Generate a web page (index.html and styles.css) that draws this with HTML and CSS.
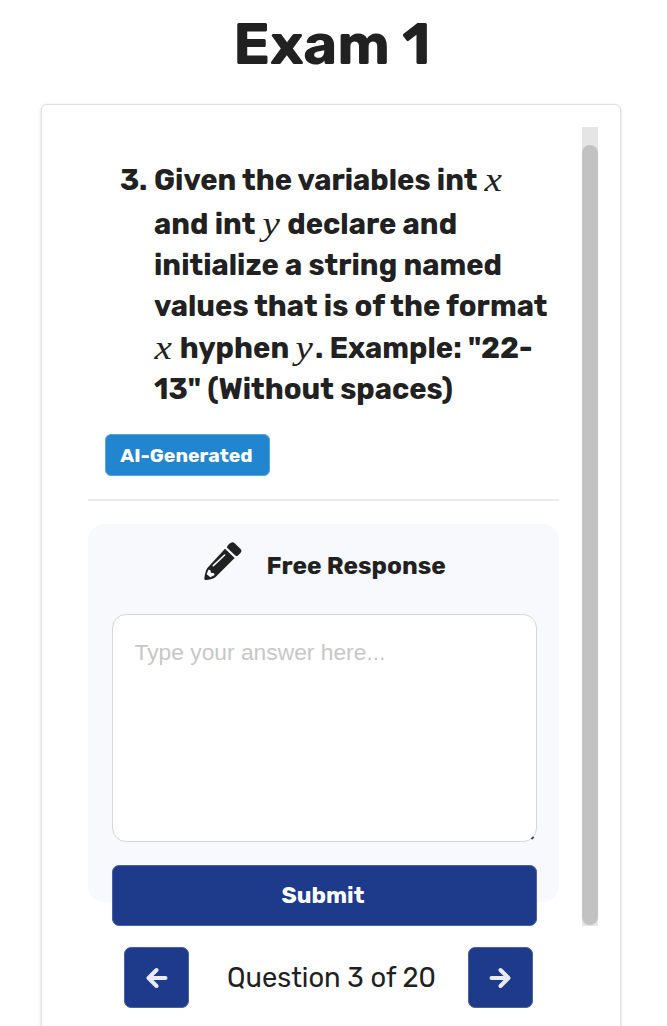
FILE: index.html
```html
<!DOCTYPE html>
<html lang="en">
<head>
<meta charset="utf-8">
<title>Exam 1</title>
<link rel="stylesheet" href="styles.css">
</head>
<body>
<h1 class="title">Exam 1</h1>
<main class="card">
  <div class="viewport">
    <div class="content">
      <div class="question">
        <span class="number">3.</span>
        <div class="prompt">
          <div class="line l1">Given the variables int <i class="math">x</i></div>
          <div class="line l2">and int <i class="math">y</i> declare and</div>
          <div class="line l3">initialize a string named</div>
          <div class="line l4">values that is of the format</div>
          <div class="line l5"><i class="math">x</i> hyphen <i class="math">y</i>. Example: "22-</div>
          <div class="line l6">13" (Without spaces)</div>
        </div>
      </div>
      <span class="badge">AI-Generated</span>
      <section class="response">
        <h2 class="heading">
          <svg class="pencil" viewBox="44 36 114 116" width="38" height="38.67">
            <path fill="#212121" d="M119 42L125 38Q131 35 136 40L153 56Q159 62 154 68L145 77Q141 80 137 76L115 55Q111 51 115 47Z"/>
            <path fill="#212121" d="M107 56L136 84L78 142Q70 149 48 150Q44 150 45 145Q47 125 54 114Z"/>
            <path stroke="#f8f9fd" stroke-width="4.5" stroke-linecap="round" d="M72 107L106 75"/>
            <path fill="#f8f9fd" d="M57 119L63 120L65 128L74 130L76 135L63 142L52 133Z"/>
          </svg>
          <span>Free Response</span>
        </h2>
        <div class="field">
          <textarea class="answer" placeholder="Type your answer here..."></textarea>
          <span class="grip"></span>
        </div>
        <button class="submit">Submit</button>
      </section>
    </div>
    <div class="track"><div class="thumb"></div></div>
  </div>
  <nav class="pager">
    <button class="step" aria-label="Previous"><svg class="arrow" viewBox="0 0 22 22" width="22" height="22"><path d="M19.5 11H3.5M10.5 3L2.5 11L10.5 19"/></svg></button>
    <span class="count">Question 3 of 20</span>
    <button class="step" aria-label="Next"><svg class="arrow" viewBox="0 0 22 22" width="22" height="22"><path d="M2.5 11H18.5M11.5 3L19.5 11L11.5 19"/></svg></button>
  </nav>
</main>
</body>
</html>
```
FILE: styles.css
```css
* { box-sizing: border-box; }
html { overflow: hidden; }
body { margin: 0; height: 1026px; overflow: hidden; background: #fff; color: #212121; font-family: Rubik, Inter, sans-serif; }
.title { margin: 0; height: 104px; padding: 4px 3px 0 0; font-size: 57.5px; line-height: 80px; font-weight: 700; text-align: center; }
.card { width: 580px; height: 960px; margin-left: 41px; padding: 22px 22px 0 46px; border: 1px solid #dedfe1; border-radius: 6px; box-shadow: 0 1px 3px rgba(0,0,0,.16); }
.viewport { display: flex; justify-content: space-between; height: 799px; }
.content { width: 471px; }
.question { display: flex; height: 307px; padding: 33px 0 0 32px; font-size: 29.23px; font-weight: 700; white-space: nowrap; }
.number { width: 34px; line-height: 41px; letter-spacing: -.3px; }
.line { height: 41px; line-height: 41px; }
.l1 { height: 44px; }
.l5 { height: 42px; line-height: 43px; }
.math { display: inline-block; width: 19.5px; font: italic 400 34px/30px "Liberation Serif", serif; transform: translate(.5px, 1px) scaleX(1.15); transform-origin: left; }
.badge { display: block; width: 165px; height: 42px; margin-left: 17px; padding-right: 2px; border: 1px solid #5ba4da; border-radius: 6px; background: #2185d0; color: #fff; font-size: 19.5px; line-height: 41px; font-weight: 700; text-align: center; }
.response { position: relative; height: 401px; margin-top: 23px; padding: 41px 22.5px 0 23.5px; border-top: 2px solid #ececee; display: flex; flex-direction: column; isolation: isolate; }
.response::before { content: ""; position: absolute; z-index: -1; inset: 23px 0 -2px; border-radius: 16px; background: #f8f9fd; }
.heading { display: flex; gap: 24.5px; height: 72px; margin: 0; padding-left: 92.5px; font-size: 24.5px; line-height: 48px; font-weight: 700; flex: none; white-space: nowrap; }
.pencil { flex: none; }
.field { position: relative; height: 228px; flex: none; margin-bottom: 23px; }
.answer { display: block; width: 425px; height: 228px; margin: 0; padding: 22px; border: 1px solid #d5d6d8; border-radius: 14px; background: #fff; font: 22.8px/30px "Liberation Sans", sans-serif; resize: none; outline: 0; }
.answer::placeholder { color: #c7c7c7; }
.grip { position: absolute; right: 3px; bottom: 3px; width: 3px; height: 2px; background: #444; transform: rotate(-40deg); }
button { border: 1px solid #4a61a2; border-radius: 7px; background: #1e3a8a; color: #fff; padding: 0; font-family: inherit; }
.submit { height: 61px; flex: none; font-size: 23px; font-weight: 700; line-height: 56px; padding: 0 2px 2px 0; }
.track { width: 16px; height: 799px; padding-top: 18px; background: #e5e5e5; }
.thumb { height: 780px; border-radius: 8px; background: #c2c2c2; }
.pager { display: flex; align-items: center; justify-content: space-between; width: 409px; height: 61px; margin: 21px 0 0 36px; }
.step { display: flex; align-items: center; justify-content: center; width: 65px; height: 61px; }
.arrow { fill: none; stroke: #e8ebf5; stroke-width: 4; stroke-linecap: round; stroke-linejoin: round; }
.count { padding-left: 6px; font-size: 27.3px; line-height: 60px; white-space: nowrap; }
```
